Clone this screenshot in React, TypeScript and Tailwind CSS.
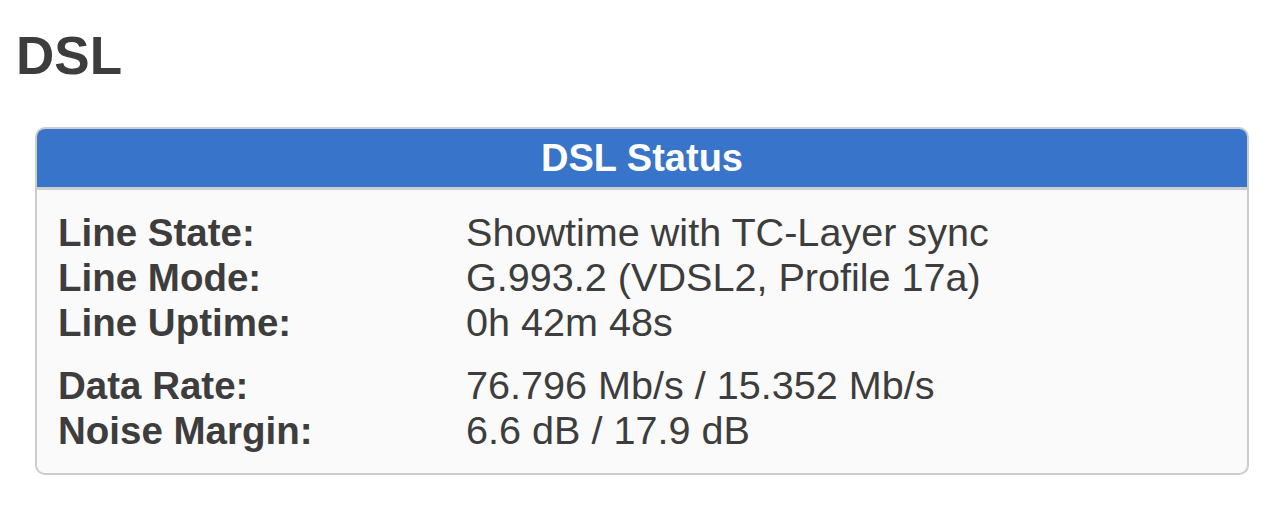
import React from 'react';

const groups: [string, string][][] = [
  [
    ['Line State:', 'Showtime with TC-Layer sync'],
    ['Line Mode:', 'G.993.2 (VDSL2, Profile 17a)'],
    ['Line Uptime:', '0h 42m 48s'],
  ],
  [
    ['Data Rate:', '76.796 Mb/s / 15.352 Mb/s'],
    ['Noise Margin:', '6.6 dB / 17.9 dB'],
  ],
];

export default function App() {
  return (
    <div className="min-h-[524px] bg-white text-[#3d3d3d] font-['Liberation_Sans',Arial,sans-serif]">
      <h1 className="pl-[16px] pt-[25px] text-[53px] leading-[61px] font-bold">DSL</h1>

      <div className="mt-[41px] ml-[35px] mr-[35px] rounded-[10px] border-2 border-[#cccccc] bg-[#fafafa] overflow-hidden">
        <div className="h-[57px] bg-[#3874c9] border-b-[3px] border-[#cfcfcf] box-content text-center text-white text-[38px] leading-[57px] font-bold pt-[1px]">
          DSL Status
        </div>

        <div className="pl-[21px] pt-[20px] pb-[20px] flex flex-col gap-[18px]">
          {groups.map((rows, i) => (
            <div key={i} className="grid grid-cols-[408px_1fr]">
              {rows.map(([label, value]) => (
                <React.Fragment key={label}>
                  <div className="text-[38.5px] leading-[45px] font-bold">{label}</div>
                  <div className="text-[39.6px] leading-[45px]">{value}</div>
                </React.Fragment>
              ))}
            </div>
          ))}
        </div>
      </div>
    </div>
  );
}
